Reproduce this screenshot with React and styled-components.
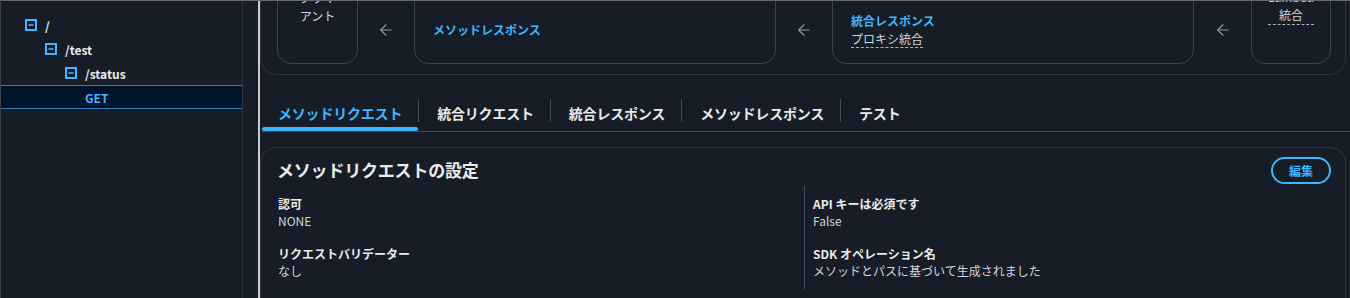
import React from "react";
import styled, { createGlobalStyle } from "styled-components";
import { ArrowLeft, ArrowRight } from "lucide-react";

const GlobalStyle = createGlobalStyle`
  * { box-sizing: border-box; }
  body {
    margin: 0;
    background: #161d26;
    font-family: "Noto Sans CJK JP", "Noto Sans", sans-serif;
    color: #e9ebed;
  }
`;

const Page = styled.div`
  display: flex;
  width: 1350px;
  height: 298px;
  overflow: hidden;
  border-top: 1px solid #656a70;
  border-left: 1px solid #3a4048;
  background: #161d26;
`;

const Sidebar = styled.nav`
  width: 242px;
  flex-shrink: 0;
  padding-top: 12px;
  border-right: 1px solid #2c333c;
`;

const Gutter = styled.div`
  width: 17px;
  flex-shrink: 0;
  border-right: 2px solid #c9cbcf;
`;

const TreeRow = styled.div`
  display: flex;
  align-items: center;
  gap: 8px;
  height: 24px;
  padding-left: ${({ $level }) => 24 + $level * 20}px;
  font-size: 12px;
  font-weight: 700;
  color: ${({ $selected }) => ($selected ? "#42b4ff" : "#e9ebed")};
  background: ${({ $selected }) => ($selected ? "#00142b" : "transparent")};
  border-top: 1px solid ${({ $selected }) => ($selected ? "#2b7fc4" : "transparent")};
  border-bottom: 1px solid ${({ $selected }) => ($selected ? "#2b7fc4" : "transparent")};
`;

const Main = styled.main`
  flex: 1;
  min-width: 0;
`;

/* the diagram card is scrolled partly out of view in the original */
const FlowCard = styled.section`
  margin: -110px 4px 0 0;
  padding: 16px 14px 10px 16px;
  border: 1px solid #2e353f;
  border-radius: 16px;
`;

const Flow = styled.div`
  display: grid;
  grid-template-columns: 81px 56px 1fr 56px 1fr 57px 80px;
  grid-template-rows: 68px 76px;
  row-gap: 12px;
`;

const SideTile = styled.div`
  grid-column: ${({ $col }) => $col};
  grid-row: 1 / 3;
  display: flex;
  flex-direction: column;
  justify-content: flex-end;
  align-items: center;
  padding: 0 16px 38px;
  border: 1px solid #3b434e;
  border-radius: 14px;
  text-align: center;
  font-size: 12px;
  line-height: 18px;
  color: #d1d5db;
`;

const Dashed = styled.span`
  display: inline-block;
  border-bottom: 1px dashed #aab2bd;
  line-height: 18px;
`;

const Tile = styled.div`
  grid-column: ${({ $col }) => $col};
  grid-row: ${({ $row }) => $row};
  display: flex;
  flex-direction: column;
  justify-content: center;
  padding: ${({ $row }) => ($row === 2 ? "8px" : "0")} 18px 0;
  border: 1px solid #3b434e;
  border-radius: 14px;
  font-size: 12px;
  line-height: 18px;
`;

const TileTitle = styled.div`
  font-weight: 700;
  color: #42b4ff;
`;

const TileSub = styled.div`
  color: #d1d5db;
  span {
    border-bottom: 1px dashed #aab2bd;
  }
`;

const ArrowCell = styled.div`
  grid-column: ${({ $col }) => $col};
  grid-row: ${({ $row }) => $row};
  display: flex;
  align-items: center;
  justify-content: center;
  padding-top: ${({ $row }) => ($row === 2 ? 8 : 0)}px;
  color: #8d99a8;
`;

const Tabs = styled.div`
  display: flex;
  align-items: center;
  margin: 20px 0 0 2px;
  height: 37px;
  border-bottom: 1px solid #414d5c;
`;

const Tab = styled.div`
  position: relative;
  display: flex;
  align-items: center;
  height: 36px;
  padding: 0 16px 0 ${({ $first }) => ($first ? 16 : 18)}px;
  font-size: 14px;
  font-weight: 700;
  letter-spacing: -0.2px;
  color: ${({ $active }) => ($active ? "#42b4ff" : "#e9ebed")};
  &::after {
    content: "";
    position: absolute;
    left: 0;
    right: 0;
    bottom: 0;
    height: 4px;
    border-radius: 2px;
    background: ${({ $active }) => ($active ? "#42b4ff" : "transparent")};
  }
`;

const TabDivider = styled.div`
  width: 1px;
  height: 23px;
  margin-bottom: 6px;
  background: #414d5c;
`;

const SettingsCard = styled.section`
  margin: 15px 4px 0 0;
  padding: 8px 14px 0 16px;
  border: 1px solid #2e353f;
  border-bottom: none;
  border-radius: 16px 16px 0 0;
  height: 160px;
`;

const CardHeader = styled.div`
  display: flex;
  align-items: center;
  justify-content: space-between;
  height: 28px;
`;

const CardTitle = styled.h2`
  margin: 0;
  font-size: 17px;
  line-height: 24px;
  font-weight: 700;
  letter-spacing: -0.2px;
  color: #e9ebed;
`;

const EditButton = styled.button`
  width: 60px;
  height: 27px;
  border: 2px solid #42b4ff;
  border-radius: 14px;
  background: transparent;
  color: #42b4ff;
  font-family: inherit;
  font-size: 12px;
  font-weight: 700;
  padding: 0;
`;

const Columns = styled.div`
  display: grid;
  grid-template-columns: 1fr 1fr;
  margin-top: 2px;
`;

const Column = styled.div`
  display: flex;
  flex-direction: column;
  gap: 16px;
  padding: 9px 0 10px ${({ $divided }) => ($divided ? 8 : 0)}px;
  border-left: 1px solid ${({ $divided }) => ($divided ? "#414d5c" : "transparent")};
`;

const Field = styled.div`
  font-size: 12px;
  line-height: 17px;
`;

const Label = styled.div`
  font-weight: 700;
  color: #e9ebed;
`;

const Value = styled.div`
  color: #d1d5db;
`;

const MinusBox = () => (
  <svg width="12" height="12" viewBox="0 0 12 12">
    <rect x="1" y="1" width="10" height="10" fill="none" stroke="#42b4ff" strokeWidth="2" />
    <rect x="3.5" y="5.2" width="5" height="1.6" fill="#42b4ff" />
  </svg>
);

const tree = [
  { level: 0, label: "/" },
  { level: 1, label: "/test" },
  { level: 2, label: "/status" },
];

const tabs = ["メソッドリクエスト", "統合リクエスト", "統合レスポンス", "メソッドレスポンス", "テスト"];

const App = () => {
  return (
    <>
      <GlobalStyle />
      <Page>
        <Sidebar>
          {tree.map((node) => (
            <TreeRow key={node.label} $level={node.level}>
              <MinusBox />
              {node.label}
            </TreeRow>
          ))}
          <TreeRow $level={3} $selected>
            GET
          </TreeRow>
        </Sidebar>
        <Gutter />
        <Main>
          <FlowCard>
            <Flow>
              <SideTile $col={1}>クライアント</SideTile>
              <SideTile $col={7}>
                <Dashed>Lambda 統合</Dashed>
              </SideTile>

              <ArrowCell $col={2} $row={1}>
                <ArrowRight size={18} strokeWidth={1.5} />
              </ArrowCell>
              <Tile $col={3} $row={1}>
                <TileTitle>メソッドリクエスト</TileTitle>
              </Tile>
              <ArrowCell $col={4} $row={1}>
                <ArrowRight size={18} strokeWidth={1.5} />
              </ArrowCell>
              <Tile $col={5} $row={1}>
                <TileTitle>統合リクエスト</TileTitle>
                <TileSub>
                  <span>プロキシ統合</span>
                </TileSub>
              </Tile>
              <ArrowCell $col={6} $row={1}>
                <ArrowRight size={18} strokeWidth={1.5} />
              </ArrowCell>

              <ArrowCell $col={2} $row={2}>
                <ArrowLeft size={18} strokeWidth={1.5} />
              </ArrowCell>
              <Tile $col={3} $row={2}>
                <TileTitle>メソッドレスポンス</TileTitle>
              </Tile>
              <ArrowCell $col={4} $row={2}>
                <ArrowLeft size={18} strokeWidth={1.5} />
              </ArrowCell>
              <Tile $col={5} $row={2}>
                <TileTitle>統合レスポンス</TileTitle>
                <TileSub>
                  <span>プロキシ統合</span>
                </TileSub>
              </Tile>
              <ArrowCell $col={6} $row={2}>
                <ArrowLeft size={18} strokeWidth={1.5} />
              </ArrowCell>
            </Flow>
          </FlowCard>

          <Tabs>
            {tabs.map((t, i) => (
              <React.Fragment key={t}>
                {i > 0 && <TabDivider />}
                <Tab $active={i === 0} $first={i === 0}>
                  {t}
                </Tab>
              </React.Fragment>
            ))}
          </Tabs>

          <SettingsCard>
            <CardHeader>
              <CardTitle>メソッドリクエストの設定</CardTitle>
              <EditButton>編集</EditButton>
            </CardHeader>
            <Columns>
              <Column>
                <Field>
                  <Label>認可</Label>
                  <Value>NONE</Value>
                </Field>
                <Field>
                  <Label>リクエストバリデーター</Label>
                  <Value>なし</Value>
                </Field>
              </Column>
              <Column $divided>
                <Field>
                  <Label>API キーは必須です</Label>
                  <Value>False</Value>
                </Field>
                <Field>
                  <Label>SDK オペレーション名</Label>
                  <Value>メソッドとパスに基づいて生成されました</Value>
                </Field>
              </Column>
            </Columns>
          </SettingsCard>
        </Main>
      </Page>
    </>
  );
};

export default App;
